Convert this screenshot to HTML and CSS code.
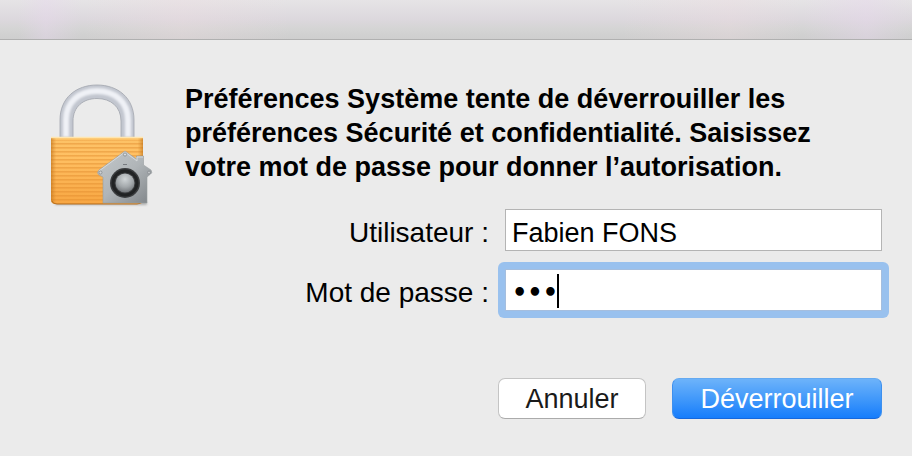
FILE: index.html
```html
<!DOCTYPE html>
<html lang="fr">
<head>
    <meta charset="UTF-8">
    <meta name="viewport" content="width=device-width, initial-scale=1.0">
    <title>Préférences Système</title>
    <link rel="stylesheet" href="styles.css">
</head>
<body>
    <div class="titlebar"></div>
    <main class="dialog">
        <svg class="lock" viewBox="0 0 110 130" aria-hidden="true">
            <defs>
                <linearGradient id="body" x1="0" y1="0" x2="0" y2="1">
                    <stop offset="0" stop-color="#fcc267"/>
                    <stop offset="0.3" stop-color="#ffc063"/>
                    <stop offset="1" stop-color="#f7a642"/>
                </linearGradient>
                <linearGradient id="sides" x1="0" y1="0" x2="1" y2="0">
                    <stop offset="0" stop-color="#b86a12" stop-opacity="0.6"/>
                    <stop offset="0.06" stop-color="#d98a2b" stop-opacity="0"/>
                    <stop offset="0.94" stop-color="#d98a2b" stop-opacity="0"/>
                    <stop offset="1" stop-color="#b86a12" stop-opacity="0.6"/>
                </linearGradient>
                <pattern id="lines" width="8" height="4" patternUnits="userSpaceOnUse">
                    <rect width="8" height="1.3" y="2.2" fill="#e0882a" opacity="0.55"/>
                </pattern>
                <linearGradient id="house" x1="0" y1="0" x2="1" y2="1">
                    <stop offset="0" stop-color="#c3c8cb"/>
                    <stop offset="0.5" stop-color="#b0b5b8"/>
                    <stop offset="1" stop-color="#7f8488"/>
                </linearGradient>
                <radialGradient id="knob" cx="0.5" cy="0.3" r="0.75">
                    <stop offset="0" stop-color="#d0d5d7"/>
                    <stop offset="0.55" stop-color="#a3a8ab"/>
                    <stop offset="1" stop-color="#6a6e72"/>
                </radialGradient>
                <filter id="soft" x="-10%" y="-200%" width="120%" height="500%">
                    <feGaussianBlur stdDeviation="1.2"/>
                </filter>
                <filter id="shine" x="-10%" y="-10%" width="120%" height="120%">
                    <feGaussianBlur stdDeviation="1.3"/>
                </filter>
            </defs>
            <rect x="5" y="121" width="92" height="3" rx="1" fill="#777" opacity="0.5" filter="url(#soft)"/>
            <path d="M10 57V39C10 17 26 4 47 4S84 17 84 39V57H71V40C71 26 61 17.500 47 17.500S23 26 23 40V57Z" fill="#c2c6cf" stroke="#a1a5ad" stroke-width="0.800"/>
            <path d="M16 56V39C16 21 29 10 47 10S78 21 78 39V56" fill="none" stroke="#eff1f6" stroke-width="6" filter="url(#shine)"/>
            <path d="M1 56H93V119Q93 123 88 123H6Q1 123 1 119Z" fill="url(#body)"/>
            <path d="M1 59H93V119Q93 123 88 123H6Q1 123 1 119Z" fill="url(#lines)"/>
            <path d="M1 56H93V119Q93 123 88 123H6Q1 123 1 119Z" fill="url(#sides)"/>
            <path d="M1 56.500H93" stroke="#ffe6b0" stroke-width="1.500"/>
            <path d="M2 120Q3 123 7 123H87Q91 123 92 120" fill="none" stroke="#b97223" stroke-width="1"/>
            <path d="M75 70L86.500 78V75H93.500V84L101 89Q103 92 100 93.500L97 96V122H53V96L49 94Q46 92 49 89Z" fill="url(#house)" stroke="#999da0" stroke-width="0.600"/>
            <path d="M49 90L75 71L87 80V76H93" fill="none" stroke="#d7dadb" stroke-width="1"/>
            <circle cx="75" cy="73.500" r="1.600" fill="#d9dde0" stroke="#858a8e" stroke-width="0.800"/>
            <circle cx="50.500" cy="91.500" r="1.500" fill="#d0d3d5" stroke="#858a8e" stroke-width="0.800"/>
            <circle cx="99" cy="91.500" r="1.500" fill="#bfc2c5" stroke="#858a8e" stroke-width="0.800"/>
            <rect x="73" y="83" width="4" height="1" fill="#777b80"/>
            <circle cx="75" cy="102" r="15" fill="#3a3c3e"/>
            <circle cx="75" cy="102" r="12" fill="none" stroke="#212324" stroke-width="3"/>
            <circle cx="75" cy="102" r="9.500" fill="url(#knob)"/>
        </svg>
        <form class="content">
            <h1 class="message">Préférences Système tente de déverrouiller les préférences Sécurité et confidentialité. Saisissez votre mot de passe pour donner l’autorisation.</h1>
            <div class="fields">
                <label for="user">Utilisateur :</label>
                <div class="field">
                    <input type="text" id="user" value="Fabien FONS">
                </div>
                <label for="password">Mot de passe :</label>
                <div class="field active">
                    <input type="password" id="password" value="abc">
                    <span class="caret"></span>
                </div>
            </div>
            <div class="actions">
                <button type="button" class="cancel">Annuler</button>
                <button type="submit" class="unlock">Déverrouiller</button>
            </div>
        </form>
    </main>
</body>
</html>
```
FILE: styles.css
```css
* {
    box-sizing: border-box;
    margin: 0;
    padding: 0;
}

body {
    min-height: 100vh;
    background: #ebebeb;
    color: #000;
    font-family: "Liberation Sans", Arial, sans-serif;
    font-size: 27px;
}

.titlebar {
    height: 40px;
    border-bottom: 1px solid #b0b0b0;
    background:
        linear-gradient(to right, transparent 2%, rgba(232, 215, 238, 0.4) 5%, transparent 9%, rgba(240, 220, 225, 0.3) 20%, transparent 32%, transparent 68%, rgba(240, 220, 225, 0.3) 80%, transparent 88%, rgba(232, 215, 238, 0.4) 95%, transparent),
        linear-gradient(#e6e4e6, #dcd8dd 50%, #d4d4d4 75%, #cecece);
}

.dialog {
    display: flex;
    align-items: flex-start;
    gap: 25px;
    padding: 41px 30px 36px 50px;
}

.lock {
    flex: none;
    width: 110px;
    height: 130px;
}

.content {
    flex: 1;
}

.message {
    padding-top: 1px;
    font-size: 27px;
    font-weight: bold;
    line-height: 34px;
}

.fields {
    display: grid;
    grid-template-columns: 1fr 377px;
    align-items: center;
    gap: 18px 16px;
    margin-top: 25px;
}

.fields label {
    padding-top: 6px;
    font-size: 28px;
    text-align: right;
}

.field {
    position: relative;
}

.field input {
    display: block;
    width: 100%;
    height: 42px;
    padding: 6px 6px 0;
    border: 1px solid #b4b4b4;
    outline: none;
    background: #fff;
    color: #000;
    font: inherit;
}

.active::before {
    content: "";
    position: absolute;
    inset: -7px;
    border-radius: 6px;
    background: #99c1ee;
}

.active input {
    position: relative;
    border-color: #a5bede;
    font-family: "DejaVu Sans", sans-serif;
    font-size: 24px;
    font-weight: bold;
}

.caret {
    position: absolute;
    top: 5px;
    left: 52px;
    width: 2px;
    height: 34px;
    background: #000;
}

.actions {
    display: flex;
    justify-content: flex-end;
    gap: 26px;
    margin-top: 67px;
}

.actions button {
    height: 41px;
    padding-top: 1px;
    border-radius: 7px;
    font: inherit;
}

.cancel {
    width: 148px;
    border: 1px solid #c4c4c4;
    border-bottom-color: #ababab;
    background: #fff;
    color: #1a1a1a;
}

.unlock {
    width: 210px;
    border: 1px solid #3e90ee;
    border-top-color: #65aaf1;
    border-bottom-color: #1668dc;
    background: linear-gradient(#6db3fa, #4299fa 50%, #167dfc);
    color: #fff;
}
```
